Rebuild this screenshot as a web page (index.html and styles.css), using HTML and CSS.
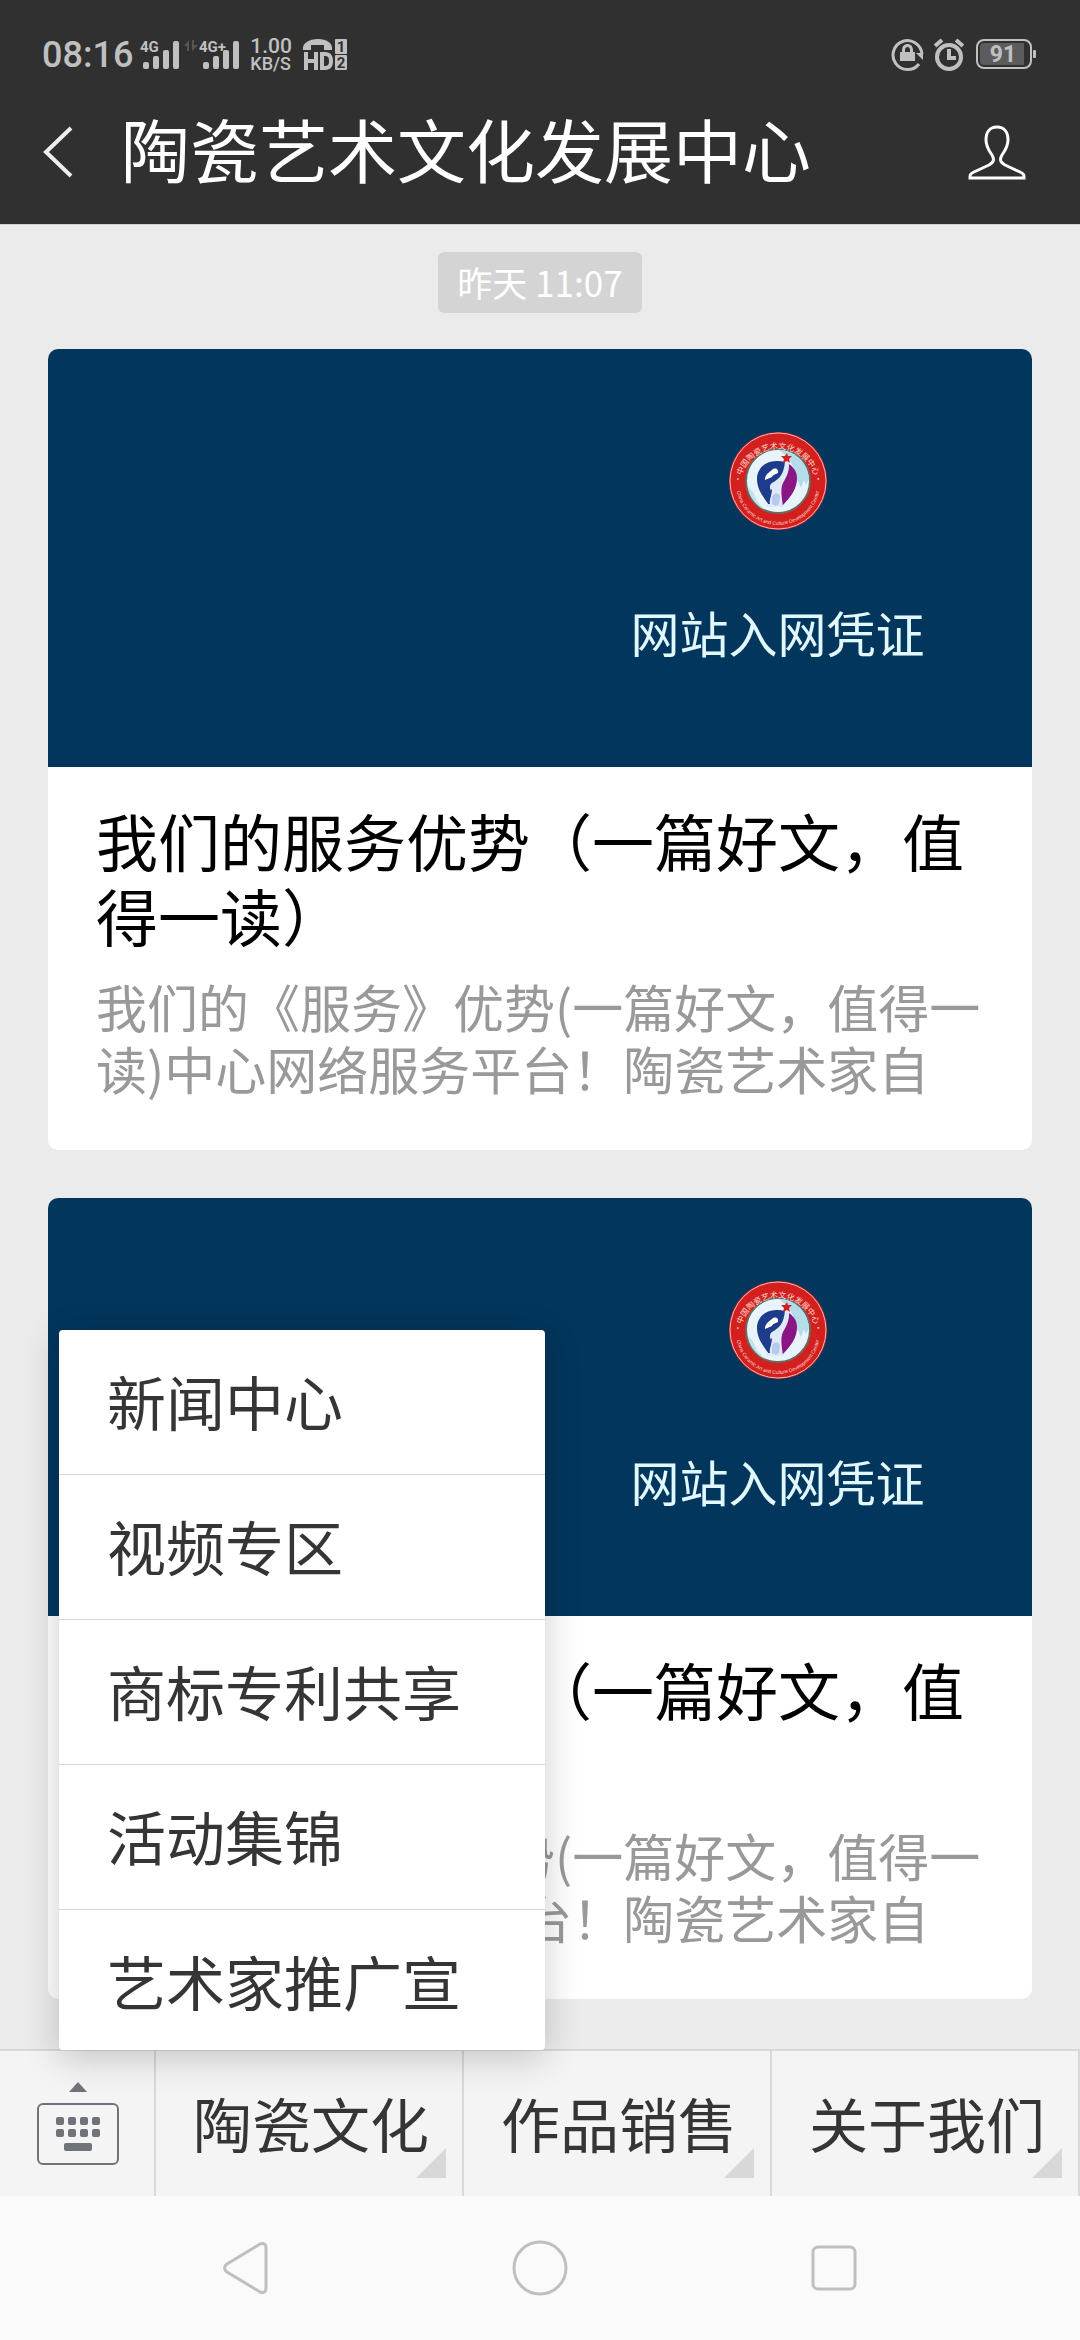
FILE: index.html
```html
<!DOCTYPE html>
<html lang="zh-CN">
<head>
    <meta charset="UTF-8">
    <meta name="viewport" content="width=device-width, initial-scale=1.0">
    <title>陶瓷艺术文化发展中心</title>
    <link rel="stylesheet" href="styles.css">
</head>
<body>
    <header class="header">
        <div class="status-bar">
            <span class="clock">08:16</span>
            <svg class="signal" width="40" height="32" viewBox="0 0 40 32">
                <text x="0" y="13">4G</text>
                <rect x="3" y="23" width="6" height="7" rx="2"/>
                <rect x="13" y="17" width="6" height="13" rx="2"/>
                <rect x="23" y="11" width="6" height="19" rx="2"/>
                <rect x="33" y="2" width="6" height="28" rx="2"/>
            </svg>
            <svg class="signal signal-2" width="56" height="32" viewBox="0 0 56 32">
                <path d="M0 7l5-6v11H3V7zM8 1h2v5h4l-6 6z" fill="#555"/>
                <text x="15" y="13">4G+</text>
                <rect x="19" y="23" width="6" height="7" rx="2"/>
                <rect x="29" y="17" width="6" height="13" rx="2"/>
                <rect x="39" y="11" width="6" height="19" rx="2"/>
                <rect x="49" y="2" width="6" height="28" rx="2"/>
            </svg>
            <span class="speed"><b>1.00</b><small>KB/S</small></span>
            <svg class="hd" width="46" height="32" viewBox="0 0 46 32">
                <path d="M1 11C0 4 7 0 16 0s15 4 14 11h-8V6H9v5z"/>
                <path d="M2 13h4v7h6v-7h4v18h-4v-7H6v7H2z"/>
                <path d="M18 13h5c6 0 8 4 8 9s-2 9-8 9h-5zm4 4v10c4 0 5-1 5-5s-1-5-5-5z" fill-rule="evenodd"/>
                <rect x="33" y="0" width="12" height="15" rx="1"/>
                <rect x="33" y="16" width="12" height="15" rx="1"/>
                <text x="39" y="13">1</text>
                <text x="39" y="29">2</text>
            </svg>
            <svg class="lock" width="34" height="34" viewBox="0 0 34 34">
                <path d="M28 26A14.500 14.500 0 1 1 31 16" fill="none" stroke="#c0c0c0" stroke-width="3"/>
                <path d="M25 15h7v7z"/>
                <path d="M9 14h2v-2c0-8 11-8 11 0v2h2v9H9zm5 0h5v-2c0-4-5-4-5 0z" fill-rule="evenodd"/>
            </svg>
            <svg class="alarm" width="30" height="34" viewBox="0 0 30 34">
                <circle cx="15" cy="19" r="12" fill="none" stroke="#c0c0c0" stroke-width="4"/>
                <path d="M15 11v9h7M1 8l7-6M29 8l-7-6" fill="none" stroke="#c0c0c0" stroke-width="4"/>
            </svg>
            <svg class="battery" width="61" height="32" viewBox="0 0 61 32">
                <rect x="1" y="1" width="54" height="28" rx="7" fill="none" stroke="#c0c0c0" stroke-width="2"/>
                <path d="M8 4h40v22H8q-4 0-4-4V8q0-4 4-4z" fill="#5c5c5c"/>
                <rect x="57" y="11" width="3" height="8" rx="1"/>
                <text x="27" y="23">91</text>
            </svg>
        </div>
        <div class="title-bar">
            <button class="icon-btn back" aria-label="返回">
                <svg width="30" height="52" viewBox="0 0 30 52"><path d="M28 2L3 26l25 24" fill="none" stroke="#eee" stroke-width="4"/></svg>
            </button>
            <h1>陶瓷艺术文化发展中心</h1>
            <button class="icon-btn profile" aria-label="公众号资料">
                <svg width="58" height="56" viewBox="0 0 58 56"><path d="M29 3c-7 0-11 5-11 13 0 7 4 12 6 15 3 5 1 8-3 10L6 48c-4 2-4 3-4 5v1h54v-1c0-2 0-3-4-5L37 41c-4-2-6-5-3-10 2-3 6-8 6-15 0-8-4-13-11-13z" fill="none" stroke="#fff" stroke-width="3"/></svg>
            </button>
        </div>
    </header>

    <main class="chat">
        <time class="time">昨天 11:07</time>

        <a class="card" href="#">
            <div class="cover">
                <svg class="emblem" width="100" height="100" viewBox="0 0 100 100">
                    <g id="emblem">
                        <path id="ringTop" d="M12 56A38 38 0 1 1 88 56" fill="none"/>
                        <path id="ringBottom" d="M8 52A42 42 0 0 0 92 52" fill="none"/>
                        <circle cx="50" cy="50" r="49" fill="#d3201f"/>
                        <circle cx="50" cy="50" r="48" fill="none" stroke="#f3b5b4" stroke-width="1"/>
                        <circle cx="50" cy="50" r="32" fill="#e9f4fa" stroke="#6b6a62" stroke-width="2"/>
                        <path d="M51 19c16 0 29 13 30 29l-3 6-2-5-3 8-3-7-4 3c3-14-2-24-15-34z" fill="#b5dce9"/>
                        <path d="M20 56l5 5 4 9 8 9c-9-4-16-13-17-23z" fill="#bfe3ea"/>
                        <path d="M50 30C38 29 29 37 29 48c0 11 7 19 13 27h12c8-8 14-17 14-29 0-5-3-9-6-12-3-3-7-4-12-4z" fill="#1d3c8c"/>
                        <path d="M61 33c4 3 8 7 8 14 0 12-7 20-16 28-1-8-3-18 0-24 5-6 7-12 8-18z" fill="#8a1583"/>
                        <path d="M57 30h4c1 10-3 17-6 22-3 6-1 15 0 24H38c2-5 5-9 5-15-1-4-2-7 1-9 7-4 12-8 13-22z" fill="#dfe9fa"/>
                        <path d="M44 39c3-3 7-1 6 3-3 2-5 1-6 4l-7 3c0-5 3-7 7-10z" fill="#fff"/>
                        <path d="M40 73c-1-7 0-12 4-15 0 6-3 10-2 15z" fill="#1d3c8c"/>
                        <path d="M44 66c2-5 7-5 8 0l-1 7-3 2-4-2z" fill="#b9c9ee"/>
                        <path d="M59 22l1 3h4l-3 3 1 4-3-2-4 2 1-4-3-3h4z" fill="#d3201f"/>
                        <text class="ring-cn"><textPath href="#ringTop" startOffset="50%" text-anchor="middle">·中国陶瓷艺术文化发展中心·</textPath></text>
                        <text class="ring-en"><textPath href="#ringBottom" startOffset="50%" text-anchor="middle">China Ceramic Art and Culture Development Center</textPath></text>
                    </g>
                </svg>
                <span class="cover-text">网站入网凭证</span>
            </div>
            <div class="card-body">
                <h2>我们的服务优势（一篇好文，值得一读）</h2>
                <p>我们的《服务》优势(一篇好文，值得一读)中心网络服务平台！陶瓷艺术家自</p>
            </div>
        </a>

        <a class="card" href="#">
            <div class="cover">
                <svg class="emblem" width="100" height="100" viewBox="0 0 100 100"><use href="#emblem"/></svg>
                <span class="cover-text">网站入网凭证</span>
            </div>
            <div class="card-body">
                <h2>我们的服务优势（一篇好文，值得一读）</h2>
                <p>我们的《服务》优势(一篇好文，值得一读)中心网络服务平台！陶瓷艺术家自</p>
            </div>
        </a>
    </main>

    <footer class="menu-bar">
        <button class="keyboard" aria-label="切换键盘">
            <svg width="82" height="84" viewBox="0 0 82 84">
                <path d="M32 11L41 1l9 10z"/>
                <rect x="1" y="23" width="80" height="60" rx="5" fill="none" stroke="#70747a" stroke-width="2"/>
                <rect x="19" y="36" width="8" height="8" rx="2"/>
                <rect x="31" y="36" width="8" height="8" rx="2"/>
                <rect x="43" y="36" width="8" height="8" rx="2"/>
                <rect x="55" y="36" width="8" height="8" rx="2"/>
                <rect x="19" y="48" width="8" height="8" rx="2"/>
                <rect x="31" y="48" width="8" height="8" rx="2"/>
                <rect x="43" y="48" width="8" height="8" rx="2"/>
                <rect x="55" y="48" width="8" height="8" rx="2"/>
                <rect x="27" y="62" width="28" height="8" rx="2"/>
            </svg>
        </button>
        <button class="tab">陶瓷文化</button>
        <button class="tab">作品销售</button>
        <button class="tab">关于我们</button>

        <!-- 弹出的子菜单 -->
        <div class="submenu">
            <button>新闻中心</button>
            <button>视频专区</button>
            <button>商标专利共享</button>
            <button>活动集锦</button>
            <button>艺术家推广宣</button>
        </div>
    </footer>

    <nav class="nav-bar">
        <button class="icon-btn" aria-label="返回上一页">
            <svg width="56" height="56" viewBox="0 0 56 56"><path d="M42 4L9 24q-5 4 0 8l33 20q6 2 6-4V8q0-6-6-4z"/></svg>
        </button>
        <button class="icon-btn" aria-label="主屏幕">
            <svg width="56" height="56" viewBox="0 0 56 56"><circle cx="28" cy="28" r="26"/></svg>
        </button>
        <button class="icon-btn" aria-label="最近任务">
            <svg width="56" height="56" viewBox="0 0 56 56"><rect x="7" y="7" width="42" height="42" rx="5"/></svg>
        </button>
    </nav>
</body>
</html>
```

FILE: styles.css
```css
* {
    box-sizing: border-box;
}
body {
    margin: 0;
    min-height: 100vh;
    display: flex;
    flex-direction: column;
    font-family: "Noto Sans CJK SC", sans-serif;
    background-color: #ebebeb;
}
button {
    border: none;
    background: none;
    padding: 0;
    font-family: inherit;
    color: inherit;
    cursor: pointer;
}
svg {
    display: block;
    flex: none;
}
h1, h2, p {
    margin: 0;
    font-weight: 400;
}
.icon-btn {
    display: flex;
    align-items: center;
    justify-content: center;
}

/* 顶部 */
.header {
    background-color: #303030;
    color: #fff;
    border-bottom: 1px solid #d0d0d0;
}
.status-bar {
    display: flex;
    align-items: center;
    height: 80px;
    padding: 30px 43px 0 42px;
    font-family: Roboto, sans-serif;
    color: #c0c0c0;
    fill: #c0c0c0;
}
.clock {
    font-size: 36px;
    line-height: 48px;
    font-weight: 500;
}
.signal {
    margin-left: 7px;
}
.signal-2 {
    margin-left: 4px;
}
.signal text {
    font-size: 15px;
    font-weight: 700;
}
.speed {
    display: flex;
    flex-direction: column;
    margin-left: 10px;
}
.speed b {
    font-size: 21px;
    line-height: 17px;
    font-weight: 500;
}
.speed small {
    font-size: 18px;
    line-height: 17px;
    font-weight: 500;
}
.hd {
    margin-left: 10px;
}
.hd text {
    font-size: 15px;
    font-weight: 700;
    text-anchor: middle;
    fill: #303030;
}
.lock {
    margin-left: auto;
}
.alarm {
    margin-left: 9px;
}
.battery {
    margin-left: 12px;
}
.battery text {
    font-size: 23px;
    font-weight: 700;
    text-anchor: middle;
}
.title-bar {
    display: flex;
    align-items: center;
    height: 144px;
    padding: 0 54px 0 43px;
}
.title-bar h1 {
    flex: 1;
    margin-left: 48px;
    padding-bottom: 8px;
    font-size: 69px;
    line-height: 96px;
    white-space: nowrap;
}

/* 消息列表 */
.chat {
    flex: 1;
    display: flex;
    flex-direction: column;
    padding: 27px 48px 48px;
}
.time {
    align-self: center;
    padding: 5px 19px 7px;
    margin-bottom: 36px;
    border-radius: 6px;
    background-color: #d4d4d4;
    color: #fff;
    font-size: 35px;
    line-height: 49px;
}
.card {
    display: block;
    overflow: hidden;
    border-radius: 10px;
    background-color: #fff;
    text-decoration: none;
}
.card + .card {
    margin-top: 48px;
}
.cover {
    display: flex;
    flex-direction: column;
    align-items: center;
    height: 418px;
    padding: 82px 0 0 475px;
    background-color: #03365c;
}
.ring-cn {
    font-size: 8px;
    fill: #fbd9c8;
}
.ring-en {
    font-family: "Liberation Sans", sans-serif;
    font-size: 5px;
    fill: #fbd9c8;
}
.cover-text {
    margin-top: 67px;
    font-size: 49px;
    line-height: 68px;
    color: #e2f8ff;
}
.card-body {
    padding: 36px 48px 51px;
}
.card-body h2 {
    font-size: 62px;
    line-height: 75px;
    color: #000;
}
.card-body p {
    margin-top: 22px;
    font-size: 51px;
    line-height: 62px;
    color: #999;
}

/* 底部菜单 */
.menu-bar {
    position: relative;
    display: flex;
    height: 147px;
    border-top: 2px solid #d8d8d8;
    background-color: #f4f4f4;
    color: #353535;
}
.keyboard {
    display: flex;
    justify-content: center;
    align-items: center;
    width: 156px;
    padding: 0 0 2px 2px;
    border-right: 2px solid #d8d8d8;
    fill: #70747a;
}
.tab {
    position: relative;
    flex: 1;
    padding: 0 0 2px 4px;
    border-right: 2px solid #d8d8d8;
    font-size: 59px;
    line-height: 84px;
}
.tab::after {
    content: "";
    position: absolute;
    right: 16px;
    bottom: 18px;
    border-left: 30px solid transparent;
    border-bottom: 30px solid #d8d8d8;
}
.submenu {
    position: absolute;
    left: 59px;
    bottom: 146px;
    width: 486px;
    border-radius: 4px;
    background-color: #fff;
    box-shadow: 0 8px 36px rgba(0, 0, 0, 0.2);
}
.submenu button {
    display: block;
    width: 100%;
    padding: 29px 48px 31px;
    border-bottom: 1px solid #d8d8d8;
    font-size: 59px;
    line-height: 84px;
    text-align: left;
    white-space: nowrap;
}
.submenu button:last-child {
    padding-bottom: 27px;
    border-bottom: none;
}

/* 系统导航 */
.nav-bar {
    display: flex;
    height: 144px;
    padding: 0 99px;
    background-color: #fafafa;
}
.nav-bar .icon-btn {
    flex: 1;
}
.nav-bar svg {
    fill: none;
    stroke: #bfbfbf;
    stroke-width: 3px;
}
```
